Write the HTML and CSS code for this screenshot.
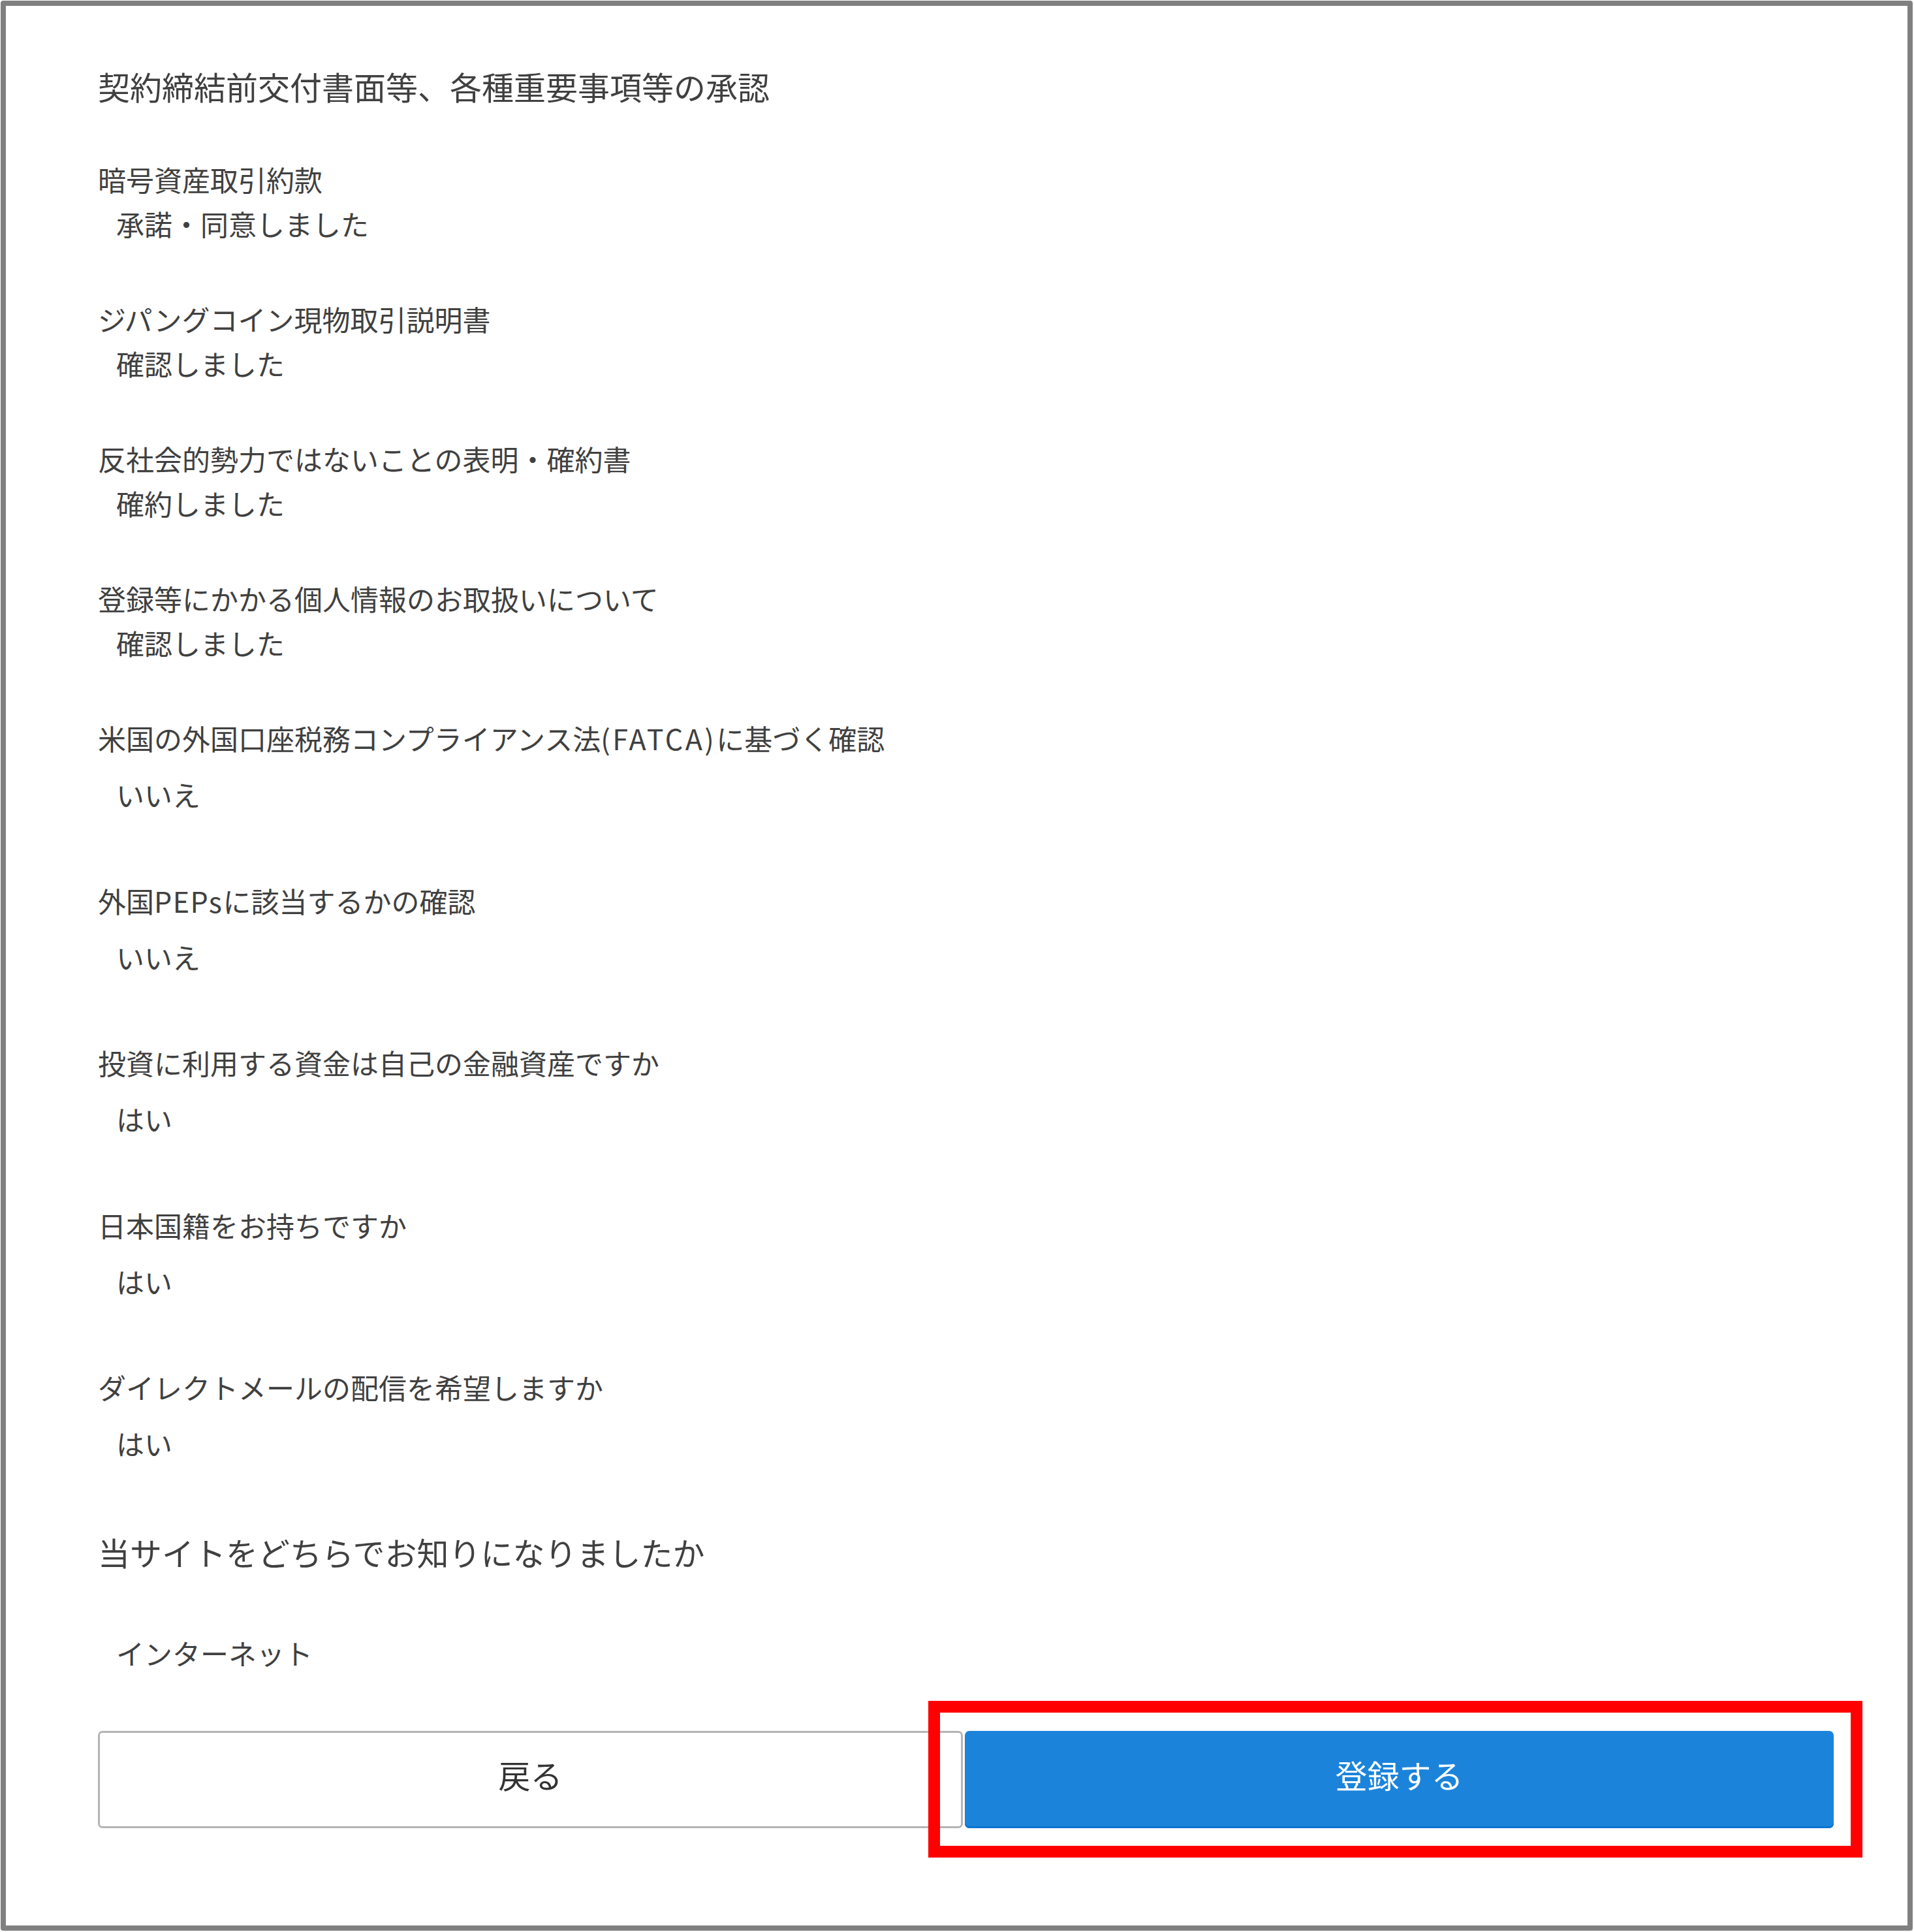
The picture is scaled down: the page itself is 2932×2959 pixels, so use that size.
FILE: index.html
```html
<!DOCTYPE html>
<html lang="ja">
<head>
<meta charset="utf-8">
<title>契約締結前交付書面等、各種重要事項等の承認</title>
<link rel="stylesheet" href="styles.css">
</head>
<body>
<div class="frame">
  <h2 class="heading">契約締結前交付書面等、各種重要事項等の承認</h2>

  <div class="item item-agree">
    <div class="label">暗号資産取引約款</div>
    <div class="value">承諾・同意しました</div>
  </div>
  <div class="item item-agree">
    <div class="label">ジパングコイン現物取引説明書</div>
    <div class="value">確認しました</div>
  </div>
  <div class="item item-agree">
    <div class="label">反社会的勢力ではないことの表明・確約書</div>
    <div class="value">確約しました</div>
  </div>
  <div class="item item-agree">
    <div class="label">登録等にかかる個人情報のお取扱いについて</div>
    <div class="value">確認しました</div>
  </div>

  <div class="item item-choice">
    <div class="label">米国の外国口座税務コンプライアンス法<span class="latin-wide">(FATCA)</span>に基づく確認</div>
    <div class="value">いいえ</div>
  </div>
  <div class="item item-choice">
    <div class="label">外国<span class="latin">PEPs</span>に該当するかの確認</div>
    <div class="value">いいえ</div>
  </div>
  <div class="item item-choice">
    <div class="label">投資に利用する資金は自己の金融資産ですか</div>
    <div class="value">はい</div>
  </div>
  <div class="item item-choice">
    <div class="label">日本国籍をお持ちですか</div>
    <div class="value">はい</div>
  </div>
  <div class="item item-choice">
    <div class="label">ダイレクトメールの配信を希望しますか</div>
    <div class="value">はい</div>
  </div>

  <div class="question">当サイトをどちらでお知りになりましたか</div>
  <div class="answer">インターネット</div>

  <div class="actions">
    <button class="btn btn-back" type="button">戻る</button>
    <button class="btn btn-submit" type="button">登録する</button>
    <div class="highlight"></div>
  </div>
</div>
</body>
</html>
```

FILE: styles.css
```css
html, body {
  margin: 0;
  padding: 0;
  background: #ffffff;
}

body {
  font-family: "Noto Sans CJK JP", "Noto Sans", sans-serif;
  color: #404040;
}

.frame {
  box-sizing: border-box;
  width: 2929px;
  height: 2956px;
  margin: 1px 0 0 1px;
  border: 8px solid #808080;
  border-radius: 4px;
  padding: 88px 113px 0 141px;
  background: #ffffff;
}

.heading {
  margin: 0 0 73px 0;
  font-size: 49px;
  line-height: 70px;
  font-weight: 400;
  color: #404040;
}

.item {
  font-size: 43px;
  line-height: 68px;
}

.label,
.value {
  white-space: nowrap;
}

.latin-wide {
  letter-spacing: 3.5px;
}

.latin {
  letter-spacing: 1.5px;
}

.value {
  padding-left: 28px;
}

.item-agree {
  margin-bottom: 78px;
}

.item-choice .value {
  margin-top: 18px;
}

.item-choice {
  margin-bottom: 94.5px;
}

.item-choice:last-of-type {
  margin-bottom: 0;
}

.question {
  margin-top: 98px;
  font-size: 49px;
  line-height: 70px;
}

.answer {
  margin-top: 85px;
  padding-left: 28px;
  font-size: 43px;
  line-height: 68px;
}

.actions {
  position: relative;
  display: flex;
  gap: 3px;
  margin-top: 86px;
}

.btn {
  box-sizing: border-box;
  height: 149px;
  padding: 0 0 16px 0;
  border-radius: 7px;
  font-family: "Noto Sans CJK JP", "Noto Sans", sans-serif;
  font-size: 49px;
  line-height: 70px;
  display: flex;
  align-items: center;
  justify-content: center;
}

.btn-back {
  flex: 0 0 1325px;
  background: #ffffff;
  color: #333333;
  border: 3px solid #b4b4b4;
}

.btn-submit {
  flex: 1 1 auto;
  background: #1b84da;
  color: #ffffff;
  border: 0;
  box-shadow: inset 0 -3px 0 #0b74cf;
}

.highlight {
  position: absolute;
  left: 1272px;
  top: -46px;
  width: 1431px;
  height: 240px;
  box-sizing: border-box;
  border: 18px solid #ff0000;
  pointer-events: none;
}
```
